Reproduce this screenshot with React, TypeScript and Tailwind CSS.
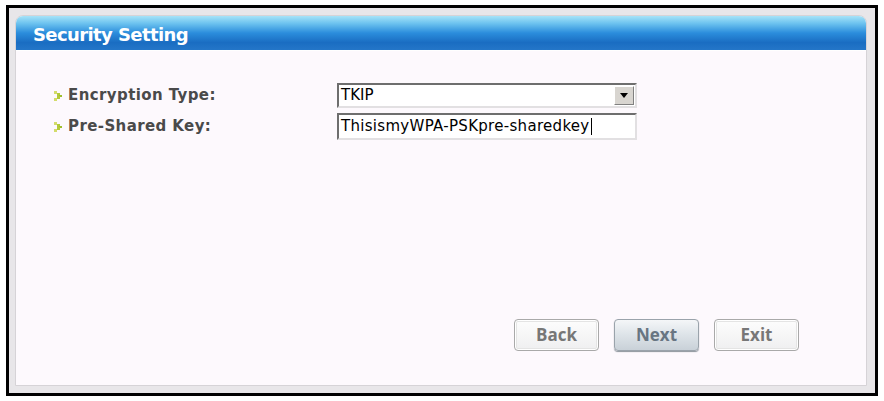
import React from 'react';

const Bullet: React.FC = () => (
  <svg width="8" height="10" viewBox="0 0 8 10" className="shrink-0">
    <rect x="0" y="0" width="3" height="3" fill="#d3dc6a" />
    <rect x="3" y="2" width="3" height="3" fill="#b3c93c" />
    <rect x="5" y="4" width="3" height="2" fill="#9fbf2e" />
    <rect x="3" y="5" width="3" height="3" fill="#b3c93c" />
    <rect x="0" y="7" width="3" height="3" fill="#d3dc6a" />
  </svg>
);

const Label: React.FC<{ text: string }> = ({ text }) => (
  <div className="flex items-center gap-[6px] w-[283px]">
    <Bullet />
    <span className="text-[15px] font-bold text-[#4a4a4a] tracking-[0.4px]">{text}</span>
  </div>
);

const WizardButton: React.FC<{ label: string; active?: boolean }> = ({ label, active }) => (
  <button
    className={
      active
        ? 'w-[85px] h-[32px] rounded-[4px] border border-[#9aa3ab] bg-gradient-to-b from-[#f4f6f8] via-[#dde3e8] to-[#c9d1d8] text-[17px] font-bold text-[#687582] shadow-[0_1px_1px_#8d959c]'
        : 'w-[85px] h-[32px] rounded-[4px] border border-[#a9a9a9] bg-gradient-to-b from-[#fdfdfd] to-[#efeff0] text-[17px] font-bold text-[#777777] shadow-[inset_0_0_0_1px_#ffffff,inset_0_0_0_2px_#e4e4e4]'
    }
    style={{ fontFamily: '"Open Sans", "Liberation Sans", sans-serif' }}
  >
    {label}
  </button>
);

export default function App() {
  return (
    <div
      className="w-[884px] h-[401px] bg-white pl-[6px] pt-[5px]"
      style={{ fontFamily: '"DejaVu Sans", "Liberation Sans", sans-serif' }}
    >
      <div className="w-[872px] h-[391px] border-[3px] border-black bg-[#e8e6e9] pl-[6px] pr-[8px] pt-[7px] pb-[7px] flex">
        <div className="flex-1 flex flex-col rounded-t-[8px] border border-[#d6d3d7] bg-[#fdf9fd] overflow-hidden">
          {/* title bar */}
          <div className="h-[35px] shrink-0 bg-[linear-gradient(180deg,#a6e3f8_0%,#6cc2ef_22%,#2b8ddc_50%,#1a6dc2_78%,#2476c8_100%)] border-b border-white flex items-center pl-[17px] pt-[3px]">
            <span className="text-[18px] font-bold text-white tracking-[-0.6px]">Security Setting</span>
          </div>

          {/* form */}
          <div className="flex flex-col gap-[5px] pl-[38px] pt-[32px]">
            <div className="flex items-center">
              <Label text="Encryption Type:" />
              <div className="w-[300px] h-[25px] flex items-center border-2 border-t-[#6e6e6e] border-l-[#6e6e6e] border-b-[#e2e0e2] border-r-[#e2e0e2] bg-white">
                <span className="flex-1 pl-[2px] text-[15px] text-black">TKIP</span>
                <div className="w-[20px] h-[19px] mr-[1px] flex items-center justify-center bg-[#d8d5d0] border border-t-white border-l-white border-b-[#808080] border-r-[#808080]">
                  <svg width="8" height="5" viewBox="0 0 8 5">
                    <path d="M0 0h8L4 5z" fill="#000" />
                  </svg>
                </div>
              </div>
            </div>
            <div className="flex items-center">
              <Label text="Pre-Shared Key:" />
              <div className="w-[300px] h-[27px] flex items-center border-2 border-t-[#6e6e6e] border-l-[#6e6e6e] border-b-[#e2e0e2] border-r-[#e2e0e2] bg-white">
                <span className="pl-[2px] text-[15px] text-black tracking-[0.3px]">ThisismyWPA-PSKpre-sharedkey</span>
                <span className="w-[1px] h-[17px] bg-black ml-[1px]" />
              </div>
            </div>
          </div>

          <div className="flex-1" />

          {/* buttons */}
          <div className="flex justify-end gap-[15px] pr-[67px] pb-[34px]">
            <WizardButton label="Back" />
            <WizardButton label="Next" active />
            <WizardButton label="Exit" />
          </div>
        </div>
      </div>
    </div>
  );
}
